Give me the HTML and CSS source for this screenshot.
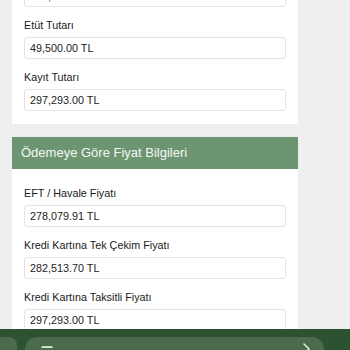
FILE: index.html
```html
<!DOCTYPE html>
<html lang="tr">
<head>
<meta charset="utf-8">
<title>Fiyat Bilgileri</title>
<link rel="stylesheet" href="styles.css">
</head>
<body>
<main class="page">
  <section class="card card-top">
    <div class="card-body">
      <div class="input">247,793.00 TL</div>
      <div class="field">
        <label class="label">Etüt Tutarı</label>
        <div class="input">49,500.00 TL</div>
      </div>
      <div class="field">
        <label class="label">Kayıt Tutarı</label>
        <div class="input">297,293.00 TL</div>
      </div>
    </div>
  </section>

  <section class="card">
    <header class="card-header">Ödemeye Göre Fiyat Bilgileri</header>
    <div class="card-body card-body-pad">
      <div class="field first">
        <label class="label">EFT / Havale Fiyatı</label>
        <div class="input">278,079.91 TL</div>
      </div>
      <div class="field">
        <label class="label">Kredi Kartına Tek Çekim Fiyatı</label>
        <div class="input">282,513.70 TL</div>
      </div>
      <div class="field">
        <label class="label">Kredi Kartına Taksitli Fiyatı</label>
        <div class="input">297,293.00 TL</div>
      </div>
    </div>
  </section>
</main>

<nav class="bottom-bar">
  <div class="side-tab"></div>
  <div class="pill">
    <span class="pill-icon"></span>
    <svg class="chevron" width="10" height="14" viewBox="0 0 10 14"><path d="M2 2 L7 7 L2 12" fill="none" stroke="#dfe6df" stroke-width="1.6" stroke-linecap="round"/></svg>
  </div>
</nav>
</body>
</html>
```

FILE: styles.css
```css
html, body {
  margin: 0;
  padding: 0;
  background: #efefef;
  font-family: "Liberation Sans", Arial, sans-serif;
  color: #222;
  overflow: hidden;
  height: 350px;
}

.page {
  width: 286px;
  padding: 0 0 0 12px;
}

.card {
  background: #fff;
  margin-bottom: 13px;
  box-shadow: 0 0 1px rgba(0,0,0,0.06);
}

.card-top {
  margin-top: -15px;
}

.card-body {
  padding: 0 12px 13px 12px;
}

.card-body-pad {
  padding-top: 6px;
}

.card-header {
  background: #6e9572;
  color: #f4f8f4;
  font-size: 13px;
  height: 32px;
  line-height: 32px;
  padding-left: 9px;
}

.field {
  display: flex;
  flex-direction: column;
  margin-top: 11px;
}

.label {
  font-size: 10.8px;
  line-height: 14px;
  height: 14px;
  margin-bottom: 5px;
  color: #1a1a1a;
}

.input {
  box-sizing: border-box;
  height: 22px;
  border: 1px solid #e4e4e4;
  border-radius: 3px;
  padding-left: 5px;
  font-size: 10.8px;
  line-height: 20px;
  color: #222;
  background: #fff;
}

.bottom-bar {
  position: fixed;
  left: 0;
  bottom: 0;
  width: 350px;
  height: 21px;
  background: #2d5231;
  overflow: hidden;
}

.side-tab {
  position: absolute;
  left: -10px;
  top: 8px;
  width: 27px;
  height: 40px;
  background: #4a6c4c;
  border-radius: 8px;
}

.pill {
  position: absolute;
  left: 25px;
  top: 8px;
  width: 299px;
  height: 40px;
  background: #4a6c4c;
  border-radius: 12px;
}

.pill-icon {
  position: absolute;
  left: 16px;
  top: 9px;
  width: 12px;
  height: 10px;
  border-top: 2px solid #cfd9cf;
  border-radius: 2px 2px 0 0;
}

.chevron {
  position: absolute;
  left: 277px;
  top: 5px;
}
```
